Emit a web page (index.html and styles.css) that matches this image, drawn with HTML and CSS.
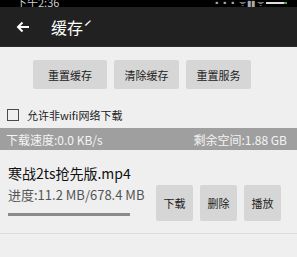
FILE: index.html
```html
<!DOCTYPE html>
<html>
<head>
<meta charset="utf-8">
<link rel="stylesheet" href="styles.css">
</head>
<body>
<div class="status"><span class="time">下午2:36</span><span class="icons">▪▪▪ ᯤ ▮▮ ᯤ <span class="batt"></span></span></div>
<div class="toolbar">
  <svg class="back" width="14" height="12" viewBox="0 0 14 12"><path d="M13 6H2M6.5 1.5L2 6l4.5 4.5" fill="none" stroke="#fff" stroke-width="2"/></svg>
  <span class="title">缓存ˊ</span>
</div>
<div class="actions">
  <button class="btn wide">重置缓存</button>
  <button class="btn">清除缓存</button>
  <button class="btn">重置服务</button>
</div>
<label class="check"><span class="box"></span>允许非wifi网络下载</label>
<div class="info"><span>下载速度:0.0 KB/s</span><span>剩余空间:1.88 GB</span></div>
<div class="item">
  <div class="meta">
    <div class="name">寒战2ts抢先版.mp4</div>
    <div class="prog">进度:11.2 MB/678.4 MB</div>
    <div class="bar"></div>
  </div>
  <div class="ops">
    <button class="op">下载</button>
    <button class="op">删除</button>
    <button class="op">播放</button>
  </div>
</div>
</body>
</html>
```
FILE: styles.css
```css
html, body { margin: 0; padding: 0; }
body {
  width: 297px; height: 257px; overflow: hidden;
  background: #efefef;
  font-family: "Noto Sans CJK SC", "Roboto", sans-serif;
}
.status {
  height: 7px; background: #000; color: #ccc; font-size: 11px;
  line-height: 5px; display: flex; justify-content: space-between;
  padding: 0 10px 0 16px; overflow: hidden;
}
.status .icons { font-size: 8px; line-height: 6px; color: #aaa; }
.batt { display: inline-block; width: 18px; height: 2px; background: #ddd; border-right: 3px solid #4a4; vertical-align: top; margin-top: 2px; }
.toolbar {
  height: 39px; background: #212121; display: flex; align-items: center;
  border-bottom: 1px solid #2c2c2c;
}
.back { margin-left: 16px; }
.title { color: #fff; font-size: 16px; margin-left: 21px; }
.actions { display: flex; gap: 7px; padding: 13px 0 0 33px; }
.btn {
  border: none; background: #d6d6d6; color: #222; font-size: 11px;
  font-family: inherit; height: 29px; width: 65px; padding: 0; border-radius: 2px;
}
.btn.wide { width: 74px; }
.check {
  display: flex; align-items: center; font-size: 11px; color: #222;
  margin: 18px 0 0 7px;
}
.box { width: 10px; height: 10px; border: 1.5px solid #4a4a4a; margin-right: 8px; }
.info {
  margin-top: 5px; height: 22px; background: #9f9f9f; color: #f4f4f4;
  font-size: 12px; display: flex; justify-content: space-between; align-items: center;
  padding: 0 10px 0 6px;
}
.item {
  display: flex; justify-content: space-between; align-items: flex-start;
  padding: 0 16px 0 8px; height: 83px; border-bottom: 1px solid #dcdcdc;
}
.meta { padding-top: 13px; }
.name { font-size: 14px; line-height: 20px; color: #111; }
.prog { font-size: 13px; line-height: 18px; color: #555; margin-top: 3px; }
.bar { width: 122px; height: 3px; background: #8a8a8a; margin-top: 9px; }
.ops { display: flex; gap: 7px; margin-top: 35px; }
.op {
  border: none; background: #d6d6d6; color: #222; font-size: 11px; font-family: inherit;
  width: 37px; height: 36px; padding: 0; border-radius: 2px;
}
```
